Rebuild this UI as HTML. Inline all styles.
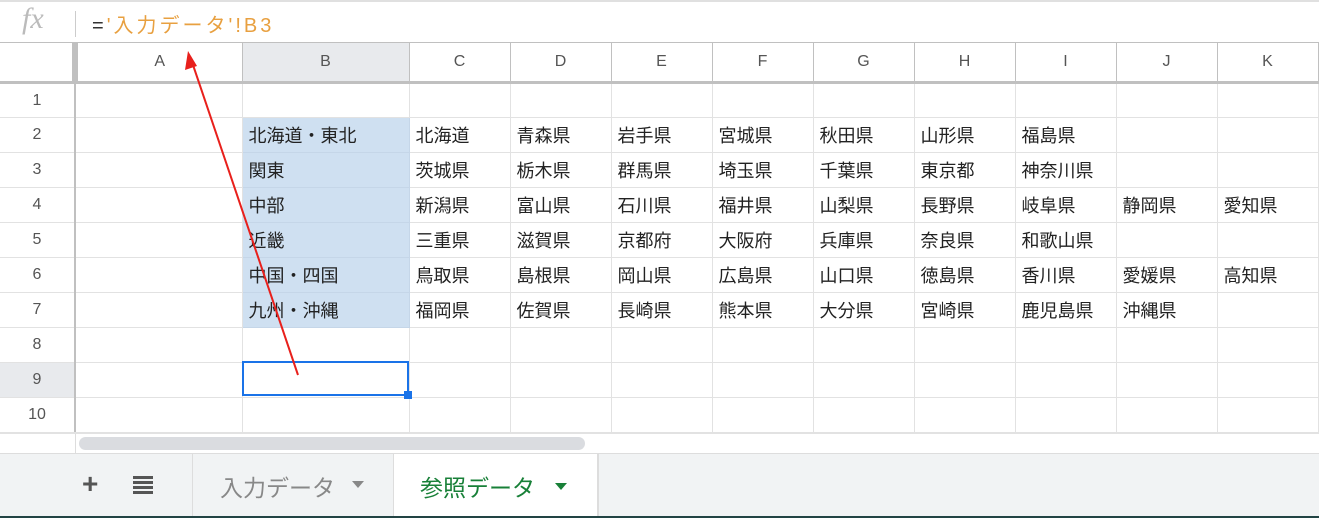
<!DOCTYPE html>
<html><head><meta charset="utf-8"><style>
body{margin:0;width:1319px;height:518px;overflow:hidden;background:#fff;font-family:"Liberation Sans","Noto Sans CJK JP",sans-serif;position:relative}
.fb{position:absolute;left:0;top:0;width:1319px;height:42px;border-top:2px solid #e0e0e0;box-sizing:border-box}
.fx{position:absolute;left:22px;top:0px;font-family:"Liberation Serif",serif;font-style:italic;font-size:30px;color:#bbb}
.sep{position:absolute;left:75px;top:9px;width:1px;height:26px;background:#ccc}
.fm{position:absolute;left:92px;top:7px;font-size:20px;color:#e8a040;font-family:"Liberation Sans","Noto Sans CJK JP",sans-serif;letter-spacing:3px}
table{position:absolute;left:0;top:42px;border-collapse:collapse;table-layout:fixed}
td{border:1px solid #e2e2e2;height:35px;padding:0 0 0 6px;font-size:18px;color:#222;white-space:nowrap;overflow:hidden;box-sizing:border-box}
tr.h td{height:40px;border:1px solid #c0c0c0;border-bottom:3px solid #c0c0c0;text-align:center;padding:0;font-size:16px;color:#555}
td.r{text-align:center;padding:0;font-size:16px;color:#555;border-left:0;border-right:2px solid #c0c0c0}
td.b{background:#cfe0f1;border-color:#c5d6e8}
.sel{background:#e8eaed!important}
.tabs{position:absolute;left:0;top:453px;width:1319px;height:63px;background:#f1f3f4;border-top:1px solid #ddd}
.bot{position:absolute;left:0;top:516px;width:1319px;height:2px;background:#244}
</style></head><body>
<div class="fb"><span class="fx">fx</span><div class="sep"></div><span class="fm"><span style="color:#333">=</span>'入力データ'!B3</span></div>
<table>
<colgroup><col style="width:75px"><col style="width:167px"><col style="width:167px"><col style="width:101px"><col style="width:101px"><col style="width:101px"><col style="width:101px"><col style="width:101px"><col style="width:101px"><col style="width:101px"><col style="width:101px"><col style="width:101px"></colgroup>
<tr class="h"><td style="border-right:6px solid #c0c0c0;border-left:0"></td><td>A</td><td class="sel">B</td><td>C</td><td>D</td><td>E</td><td>F</td><td>G</td><td>H</td><td>I</td><td>J</td><td>K</td></tr>
<tr><td class="r">1</td><td></td><td></td><td></td><td></td><td></td><td></td><td></td><td></td><td></td><td></td><td></td></tr>
<tr><td class="r">2</td><td></td><td class="b">北海道・東北</td><td>北海道</td><td>青森県</td><td>岩手県</td><td>宮城県</td><td>秋田県</td><td>山形県</td><td>福島県</td><td></td><td></td></tr>
<tr><td class="r">3</td><td></td><td class="b">関東</td><td>茨城県</td><td>栃木県</td><td>群馬県</td><td>埼玉県</td><td>千葉県</td><td>東京都</td><td>神奈川県</td><td></td><td></td></tr>
<tr><td class="r">4</td><td></td><td class="b">中部</td><td>新潟県</td><td>富山県</td><td>石川県</td><td>福井県</td><td>山梨県</td><td>長野県</td><td>岐阜県</td><td>静岡県</td><td>愛知県</td></tr>
<tr><td class="r">5</td><td></td><td class="b">近畿</td><td>三重県</td><td>滋賀県</td><td>京都府</td><td>大阪府</td><td>兵庫県</td><td>奈良県</td><td>和歌山県</td><td></td><td></td></tr>
<tr><td class="r">6</td><td></td><td class="b">中国・四国</td><td>鳥取県</td><td>島根県</td><td>岡山県</td><td>広島県</td><td>山口県</td><td>徳島県</td><td>香川県</td><td>愛媛県</td><td>高知県</td></tr>
<tr><td class="r">7</td><td></td><td class="b">九州・沖縄</td><td>福岡県</td><td>佐賀県</td><td>長崎県</td><td>熊本県</td><td>大分県</td><td>宮崎県</td><td>鹿児島県</td><td>沖縄県</td><td></td></tr>
<tr><td class="r">8</td><td></td><td></td><td></td><td></td><td></td><td></td><td></td><td></td><td></td><td></td><td></td></tr>
<tr><td class="r sel">9</td><td></td><td></td><td></td><td></td><td></td><td></td><td></td><td></td><td></td><td></td><td></td></tr>
<tr><td class="r">10</td><td></td><td></td><td></td><td></td><td></td><td></td><td></td><td></td><td></td><td></td><td></td></tr>
</table>
<div style="position:absolute;left:0;top:432px;width:1319px;height:2px;background:#e2e2e2"></div>
<div style="position:absolute;left:0;top:434px;width:75px;height:19px;border-right:1px solid #ddd"></div>
<div style="position:absolute;left:242px;top:361px;width:167px;height:35px;border:2px solid #1a73e8;box-sizing:border-box"></div>
<div style="position:absolute;left:404px;top:391px;width:8px;height:8px;background:#1a73e8"></div>
<div style="position:absolute;left:79px;top:437px;width:506px;height:13px;border-radius:7px;background:#dadce0"></div>
<div class="tabs">
<span style="position:absolute;left:82px;top:14px;font-size:28px;font-weight:bold;color:#555">+</span>
<div style="position:absolute;left:133px;top:22px;width:20px;height:19px;background:repeating-linear-gradient(#555 0 3px,transparent 3px 5px)"></div>
<div style="position:absolute;left:192px;top:0;width:1px;height:63px;background:#ddd"></div>
<span style="position:absolute;left:220px;top:15px;font-size:23px;color:#888">入力データ</span>
<span style="position:absolute;left:352px;top:27px;border:6px solid transparent;border-top:7px solid #888"></span>
<div style="position:absolute;left:393px;top:0;width:203px;height:63px;background:#fff;border-left:1px solid #ddd;border-right:2px solid #ddd"></div>
<span style="position:absolute;left:420px;top:15px;font-size:23px;color:#188038">参照データ</span>
<span style="position:absolute;left:555px;top:29px;border:6px solid transparent;border-top:7px solid #188038"></span>
</div>
<div class="bot"></div>
<svg style="position:absolute;left:0;top:0" width="1319" height="518"><line x1="298" y1="375" x2="192" y2="62" stroke="#e8201c" stroke-width="2"/><polygon points="188,51 185,70 197,66" fill="#e8201c"/></svg>
</body></html>
